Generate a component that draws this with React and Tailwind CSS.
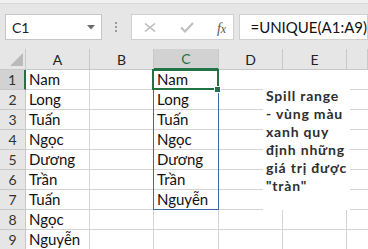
import React from "react";

const colA = ["Nam", "Long", "Tuấn", "Ngọc", "Dương", "Trần", "Tuấn", "Ngọc", "Nguyễn"];
const colC = ["Nam", "Long", "Tuấn", "Ngọc", "Dương", "Trần", "Nguyễn", "", ""];
const letters = ["A", "B", "C", "D", "E", ""];

export default function App() {
  const font = { fontFamily: "Lato, 'Liberation Sans', sans-serif" };
  return (
    <div className="w-[368px] h-[249px] overflow-hidden bg-white select-none" style={font}>
      {/* Toolbar / formula bar */}
      <div className="h-[49px] bg-[#e6e6e6] border-t-[3px] border-[#f1f1f1] relative">
        <div className="absolute left-0 right-0 top-0 h-px bg-[#d9d9d9]" />
        <div className="flex items-center pt-[11px] pl-[5px]">
          {/* Name box */}
          <div className="w-[101px] h-[26px] bg-white border border-[#c6c6c6] flex items-center justify-between pl-[6px] pr-[6px]">
            <span className="text-[14px] text-[#222]">C1</span>
            <svg width="8" height="5" viewBox="0 0 8 5"><path d="M0 0 L8 0 L4 4.5 Z" fill="#6b6b6b" /></svg>
          </div>
          {/* Dots */}
          <div className="w-[31px] flex flex-col items-center gap-[2px]">
            <div className="w-[2px] h-[2px] bg-[#9a9a9a]" />
            <div className="w-[2px] h-[2px] bg-[#9a9a9a]" />
            <div className="w-[2px] h-[2px] bg-[#9a9a9a]" />
          </div>
          {/* Function buttons */}
          <div className="w-[109px] h-[26px] bg-white border border-[#d0d0d0] flex items-center relative">
            <svg className="absolute left-[12px] top-[8px]" width="12" height="9" viewBox="0 0 12 9">
              <path d="M1 0.5 L11 8.5 M11 0.5 L1 8.5" stroke="#bdbdbd" strokeWidth="1.6" />
            </svg>
            <svg className="absolute left-[48px] top-[7px]" width="14" height="11" viewBox="0 0 14 11">
              <path d="M1 5.5 L5 9.5 L13 1" stroke="#bdbdbd" strokeWidth="2" fill="none" />
            </svg>
            <span
              className="absolute left-[85px] top-[3px] text-[14px] italic text-[#555]"
              style={{ fontFamily: "'Liberation Serif', serif" }}
            >
              f<span className="text-[12px]">x</span>
            </span>
          </div>
          {/* Formula input */}
          <div className="ml-[5px] flex-1 h-[26px] bg-white border border-[#d0d0d0] flex items-center pl-[10px]">
            <span className="text-[15px] text-[#111] whitespace-nowrap">=UNIQUE(A1:A9)</span>
          </div>
        </div>
      </div>

      {/* Grid */}
      <div className="relative">
        <div className="grid grid-cols-[26px_64px_64px_65px_64px_64px_1fr]">
          {/* Header row */}
          <div className="h-[21px] bg-[#e6e6e6] border-r border-b border-[#c8c8c8] relative">
            <svg className="absolute left-[10px] top-[4px]" width="13" height="13" viewBox="0 0 13 13">
              <path d="M13 0 L13 13 L0 13 Z" fill="#bababa" />
            </svg>
          </div>
          {letters.map((l, i) => (
            <div
              key={i}
              className={
                i === 2
                  ? "h-[21px] bg-[#d2d2d2] border-r border-[#c8c8c8] border-b-2 border-b-[#217346] flex items-center justify-center text-[14px] text-[#217346]"
                  : "h-[21px] bg-[#e6e6e6] border-r border-b border-[#c8c8c8] flex items-center justify-center text-[14px] text-[#222]"
              }
            >
              {l}
            </div>
          ))}
          {/* Body rows */}
          {colA.map((a, r) => (
            <React.Fragment key={r}>
              <div
                className={
                  r === 0
                    ? "h-[20px] bg-[#d2d2d2] border-r-2 border-r-[#217346] border-b border-[#c8c8c8] flex items-center justify-center text-[14px] text-[#333]"
                    : "h-[20px] bg-[#e6e6e6] border-r border-b border-[#c8c8c8] flex items-center justify-center text-[14px] text-[#333]"
                }
              >
                {r + 1}
              </div>
              <div className="h-[20px] border-r border-b border-[#d4d4d4] flex items-end pl-[3px] pb-[1px] text-[15px] leading-[17px] text-[#111] whitespace-nowrap">
                {a}
              </div>
              <div className="h-[20px] border-r border-b border-[#d4d4d4]" />
              <div className="h-[20px] border-r border-b border-[#d4d4d4] flex items-end pl-[3px] pb-[1px] text-[15px] leading-[17px] text-[#111] whitespace-nowrap">
                {colC[r]}
              </div>
              <div className="h-[20px] border-r border-b border-[#d4d4d4]" />
              <div className="h-[20px] border-r border-b border-[#d4d4d4]" />
              <div className="h-[20px] border-b border-[#d4d4d4]" />
            </React.Fragment>
          ))}
        </div>

        {/* Spill range border */}
        <div className="absolute left-[153px] top-[21px] w-[66px] h-[140px] border border-[#3f66b0] pointer-events-none" />

        {/* Active cell selection */}
        <div className="absolute left-[152px] top-[20px] w-[67px] h-[21px] border-2 border-[#217346] pointer-events-none" />
        <div className="absolute left-[214px] top-[37px] w-[7px] h-[7px] bg-[#217346] border border-white" />

        {/* Text box */}
        <div className="absolute left-[263px] top-[21px] w-[87px] h-[140px] bg-white pl-[3px] pt-[17px]">
          <div className="text-[14px] leading-[18px] font-bold tracking-[0.8px] text-[#2e2e2e] whitespace-nowrap">
            <div>Spill range</div>
            <div>- vùng màu</div>
            <div>xanh quy</div>
            <div>định những</div>
            <div>giá trị được</div>
            <div>"tràn"</div>
          </div>
        </div>
      </div>
    </div>
  );
}
